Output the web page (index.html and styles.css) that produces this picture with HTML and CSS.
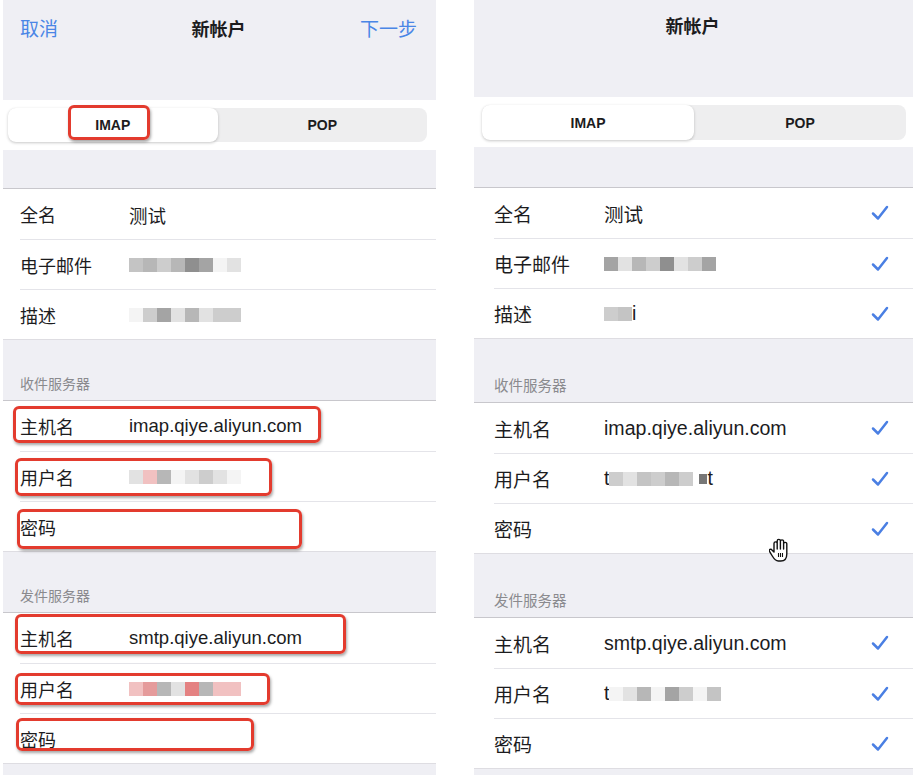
FILE: index.html
```html
<!DOCTYPE html>
<html lang="zh-CN">
<head>
  <meta charset="UTF-8">
  <meta name="viewport" content="width=device-width, initial-scale=1.0">
  <title>新帐户</title>
  <link rel="stylesheet" href="styles.css">
</head>
<body>

<div class="page">

  <!-- Left screen: annotated form -->
  <section class="phone phone-left">
    <header class="nav">
      <span class="nav-btn">取消</span>
      <span class="nav-title">新帐户</span>
      <span class="nav-btn next">下一步</span>
    </header>

    <div class="seg-band">
      <div class="seg">
        <div class="seg-item active">IMAP<span class="mark mark-imap"></span></div>
        <div class="seg-item">POP</div>
      </div>
    </div>

    <div class="group first">
      <div class="row"><span class="label">全名</span><span class="value">测试</span></div>
      <div class="row"><span class="label">电子邮件</span>
        <span class="value blur"><i class="g4"></i><i class="g3"></i><i class="g2"></i><i class="g3"></i><i class="g6"></i><i class="g5"></i><i class="g0"></i><i class="g1"></i></span>
      </div>
      <div class="row"><span class="label">描述</span>
        <span class="value blur"><i class="g0"></i><i class="g2"></i><i class="g5"></i><i class="g1"></i><i class="g3"></i><i class="g1"></i><i class="g2"></i><i class="g2"></i></span>
      </div>
    </div>

    <div class="group-head">收件服务器</div>
    <div class="group">
      <div class="row"><span class="label">主机名</span><span class="value">imap.qiye.aliyun.com</span><span class="mark mark-host-in"></span></div>
      <div class="row"><span class="label">用户名</span>
        <span class="value blur"><i class="g1"></i><i class="p1"></i><i class="g3"></i><i class="g0"></i><i class="g1"></i><i class="g2"></i><i class="g1"></i><i class="g0"></i></span>
        <span class="mark mark-user-in"></span>
      </div>
      <div class="row"><span class="label">密码</span><span class="mark mark-pass-in"></span></div>
    </div>

    <div class="group-head">发件服务器</div>
    <div class="group">
      <div class="row"><span class="label">主机名</span><span class="value">smtp.qiye.aliyun.com</span><span class="mark mark-host-out"></span></div>
      <div class="row"><span class="label">用户名</span>
        <span class="value blur"><i class="p1"></i><i class="p2"></i><i class="g3"></i><i class="g1"></i><i class="p3"></i><i class="g3"></i><i class="p1"></i><i class="p1"></i></span>
        <span class="mark mark-user-out"></span>
      </div>
      <div class="row"><span class="label">密码</span><span class="mark mark-pass-out"></span></div>
    </div>
  </section>

  <!-- Right screen: verified form -->
  <section class="phone phone-right">
    <header class="nav">
      <span></span>
      <span class="nav-title">新帐户</span>
      <span></span>
    </header>

    <div class="seg-band">
      <div class="seg">
        <div class="seg-item active">IMAP</div>
        <div class="seg-item">POP</div>
      </div>
    </div>

    <div class="group first">
      <div class="row"><span class="label">全名</span><span class="value">测试</span>
        <svg class="check" viewBox="0 0 18 18"><path d="M2 9.5 L7 14.5 L16 3"/></svg>
      </div>
      <div class="row"><span class="label">电子邮件</span>
        <span class="value blur"><i class="g5"></i><i class="g1"></i><i class="g3"></i><i class="g2"></i><i class="g6"></i><i class="g1"></i><i class="g2"></i><i class="g5"></i></span>
        <svg class="check" viewBox="0 0 18 18"><path d="M2 9.5 L7 14.5 L16 3"/></svg>
      </div>
      <div class="row"><span class="label">描述</span>
        <span class="value"><span class="blur"><i class="g2"></i><i class="g4"></i></span>i</span>
        <svg class="check" viewBox="0 0 18 18"><path d="M2 9.5 L7 14.5 L16 3"/></svg>
      </div>
    </div>

    <div class="group-head">收件服务器</div>
    <div class="group">
      <div class="row"><span class="label">主机名</span><span class="value">imap.qiye.aliyun.com</span>
        <svg class="check" viewBox="0 0 18 18"><path d="M2 9.5 L7 14.5 L16 3"/></svg>
      </div>
      <div class="row"><span class="label">用户名</span>
        <span class="value">t<span class="blur"><i class="g2"></i><i class="g1"></i><i class="g4"></i><i class="g2"></i><i class="g3"></i><i class="g2"></i><i class="dk"></i></span>t</span>
        <svg class="check" viewBox="0 0 18 18"><path d="M2 9.5 L7 14.5 L16 3"/></svg>
      </div>
      <div class="row"><span class="label">密码</span>
        <svg class="check" viewBox="0 0 18 18"><path d="M2 9.5 L7 14.5 L16 3"/></svg>
      </div>
    </div>

    <div class="group-head">发件服务器</div>
    <div class="group">
      <div class="row"><span class="label">主机名</span><span class="value">smtp.qiye.aliyun.com</span>
        <svg class="check" viewBox="0 0 18 18"><path d="M2 9.5 L7 14.5 L16 3"/></svg>
      </div>
      <div class="row"><span class="label">用户名</span>
        <span class="value">t<span class="blur"><i class="g0"></i><i class="g1"></i><i class="g3"></i><i class="g0"></i><i class="g5"></i><i class="g2"></i><i class="g0"></i><i class="g4"></i></span></span>
        <svg class="check" viewBox="0 0 18 18"><path d="M2 9.5 L7 14.5 L16 3"/></svg>
      </div>
      <div class="row"><span class="label">密码</span>
        <svg class="check" viewBox="0 0 18 18"><path d="M2 9.5 L7 14.5 L16 3"/></svg>
      </div>
    </div>

    <!-- grab cursor left in the screenshot -->
    <svg class="cursor" viewBox="0 0 22 26">
      <path d="M5 15 V6.5 a1.6 1.6 0 0 1 3.2 0 V12 V4 a1.6 1.6 0 0 1 3.2 0 V12 V4.5 a1.6 1.6 0 0 1 3.2 0 V12 V7 a1.6 1.6 0 0 1 3.2 0 V17 c0 4 -2 7 -6 7 h-2.5 c-3 0 -4.2 -2 -6 -5 l-2.8 -4.6 a1.4 1.4 0 0 1 2.4 -1.5 z"/>
      <path class="lines" d="M9.5 16 v4 M11.5 16 v4 M13.5 16 v4"/>
    </svg>
  </section>

</div>

</body>
</html>
```

FILE: styles.css
```css
/* Global */
* {
  box-sizing: border-box;
}
body {
  margin: 0;
  background: #fff;
  font-family: "Liberation Sans", "Noto Sans CJK SC", sans-serif;
  color: #1c1c1e;
}
.page {
  display: flex;
  gap: 38px;
  padding-left: 3px;
  height: 775px;
  overflow: hidden;
}

/* Phone screens */
.phone {
  position: relative;
  background: #efeff4;
  height: 775px;
  font-size: 18px;
}
.phone-left {
  width: 433px;
}
.phone-right {
  width: 439px;
  font-size: 19px;
}

/* Navigation bar */
.nav {
  display: grid;
  grid-template-columns: 1fr auto 1fr;
  align-items: start;
  height: 100px;
  padding: 18px 19px 0 17px;
  line-height: 24px;
}
.phone-right .nav {
  height: 97px;
  padding-top: 15px;
}
.nav-title {
  font-size: 18px;
  font-weight: bold;
}
.nav-btn {
  color: #4a86e6;
  font-size: 19px;
}
.nav-btn.next {
  justify-self: end;
}

/* Segmented control */
.seg-band {
  background: #fff;
  height: 50px;
  padding: 8px 9px 0 5px;
}
.phone-right .seg-band {
  padding: 8px 7px 0 8px;
}
.seg {
  display: flex;
  height: 34px;
  background: #eeeeef;
  border-radius: 8px;
}
.phone-right .seg {
  height: 35px;
}
.seg-item {
  position: relative;
  flex: 1;
  display: flex;
  align-items: center;
  justify-content: center;
  font-size: 14px;
  font-weight: bold;
}
.seg-item.active {
  background: #fff;
  border-radius: 8px;
  box-shadow: 0 1px 3px rgba(0, 0, 0, 0.22);
}

/* Grouped table */
.group {
  background: #fff;
  border-top: 1px solid #c8c7cc;
  border-bottom: 1px solid #dedde2;
  padding-left: 17px;
}
.phone-right .group {
  padding-left: 20px;
}
.group.first {
  margin-top: 38px;
}
.phone-right .group.first {
  margin-top: 40px;
}
.group-head {
  font-size: 14px;
  color: #8a8a8e;
  line-height: 20px;
  padding: 34px 0 6px 17px;
}
.phone-right .group-head {
  font-size: 14.5px;
  padding: 37px 0 6px 20px;
}
.row {
  position: relative;
  display: flex;
  align-items: center;
  height: 50px;
  padding-right: 24px;
}
.row + .row {
  border-top: 1px solid #e4e4e9;
}
.label {
  flex: none;
  width: 109px;
}
.phone-right .label {
  width: 110px;
}
.value {
  flex: 1;
  font-size: 1.03em;
  display: flex;
  align-items: center;
}

/* Redacted (pixelated) values */
.blur {
  display: inline-flex;
  align-items: center;
}
.blur i {
  display: inline-block;
  width: 14px;
  height: 14px;
}
.blur .g0 { background: #f4f4f4; }
.blur .g1 { background: #e2e2e2; }
.blur .g2 { background: #cdcdcd; }
.blur .g3 { background: #b7b7b7; }
.blur .g4 { background: #c4c4c4; }
.blur .g5 { background: #a4a4a4; }
.blur .g6 { background: #8f8f8f; }
.blur .dk { background: #777; width: 8px; height: 10px; margin-left: 6px; }
.blur .p1 { background: #f1c1c1; }
.blur .p2 { background: #e59b9b; }
.blur .p3 { background: #e48282; }

/* Check marks */
.check {
  margin-left: auto;
  width: 18px;
  height: 18px;
  fill: none;
  stroke: #4a7fe3;
  stroke-width: 2.5;
  stroke-linecap: round;
  stroke-linejoin: round;
}

/* Red annotation boxes */
.mark {
  position: absolute;
  border: 3px solid #e33b2e;
  border-radius: 6px;
  box-shadow: 1px 2px 3px rgba(0, 0, 0, 0.35);
  pointer-events: none;
}
.mark-imap { left: 60px; top: -3px; width: 82px; height: 35px; }
.mark-host-in { left: -7px; top: 5px; width: 308px; height: 37px; }
.mark-user-in { left: -5px; top: 6px; width: 257px; height: 38px; }
.mark-pass-in { left: -3px; top: 7px; width: 285px; height: 40px; }
.mark-host-out { left: -5px; top: 1px; width: 331px; height: 40px; }
.mark-user-out { left: -5px; top: 9px; width: 255px; height: 32px; }
.mark-pass-out { left: -4px; top: 4px; width: 238px; height: 33px; }

/* Cursor */
.cursor {
  position: absolute;
  left: 295px;
  top: 537px;
  width: 22px;
  height: 26px;
  fill: #fff;
  stroke: #111;
  stroke-width: 1.4;
  stroke-linejoin: round;
}
.cursor .lines {
  fill: none;
  stroke-width: 1.1;
}
```
